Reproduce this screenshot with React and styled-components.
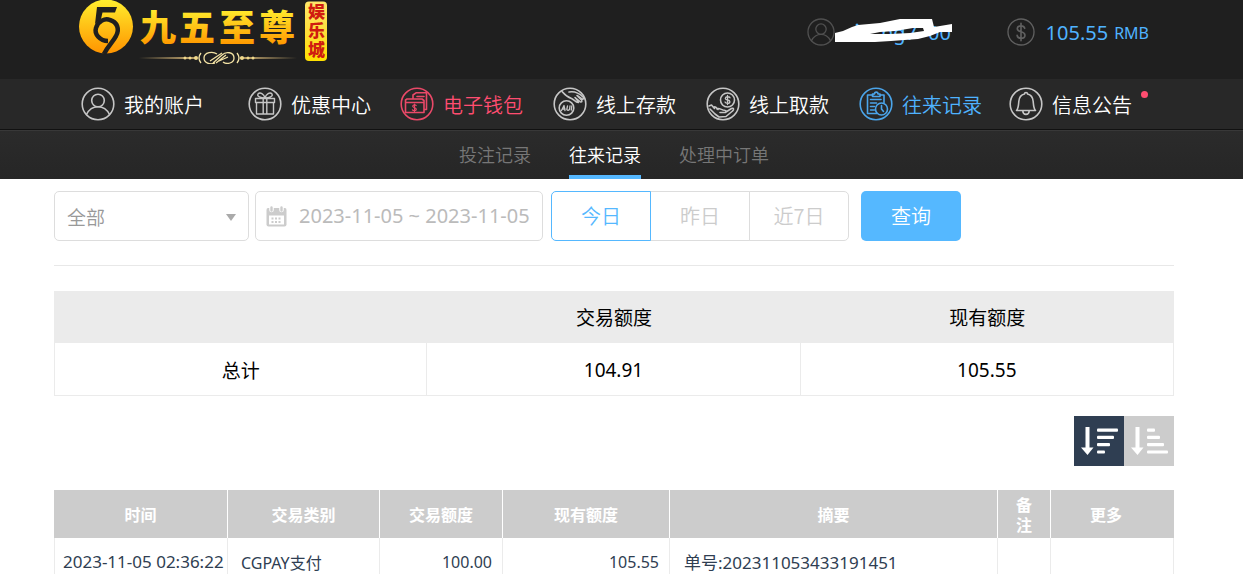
import React, { useState } from 'react'
import styled, { createGlobalStyle } from 'styled-components'

const GlobalStyle = createGlobalStyle`
html{
scrollbar-width:none;
}
body{
margin:0;
background:#fff;
font-family:'Noto Sans','Noto Sans CJK SC',sans-serif;
}
*{
box-sizing:border-box;
}
button,input,select{
font-family:inherit;
}
`
const Inner = styled.div`
padding:0 69px 0 54px;
`
const TopBar = styled.header`
background:#1f1f1f;
`
const TopRow = styled.div`
display:flex;
justify-content:space-between;
height:79px;
padding:0 25px;
`
const TopInfo = styled.div`
display:flex;
align-items:center;
height:64px;
color:#4fb3ff;
font-size:20px;
`
const UserBox = styled.div`
display:flex;
align-items:center;
margin-right:54px;
`
const Money = styled.span`
margin:0 6px 0 11px;
`
const Currency = styled.span`
font-size:16px;
padding-top:2px;
`
const NavBar = styled.nav`
background:#282828;
border-bottom:1px solid #111;
`
const NavList = styled.div`
display:grid;
grid-template-columns:167fr 152fr 153fr 153fr 153fr 150fr 165fr;
height:50px;
padding-left:27px;
`
const NavLink = styled.a`
display:flex;
align-items:center;
gap:9px;
font-family:'Noto Sans CJK SC',sans-serif;
font-size:20px;
font-weight:350;
white-space:nowrap;
text-decoration:none;
color:${(props) => props.$color || '#fff'};
svg{
flex:none;
opacity:0.9;
}
`
const NavText = styled.span`
position:relative;
`
const Dot = styled.i`
position:absolute;
top:1px;
right:-16px;
width:7px;
height:7px;
border-radius:50%;
background:#ff4d70;
`
const SubBar = styled.nav`
background:linear-gradient(#2b2b2b,#262626);
border-top:1px solid #383838;
`
const SubList = styled.div`
display:flex;
justify-content:center;
gap:38px;
height:48px;
`
const SubLink = styled.a`
display:flex;
align-items:center;
font-family:'Noto Sans CJK SC',sans-serif;
font-size:18px;
font-weight:350;
text-decoration:none;
padding-top:2px;
color:${(props) => (props.$active ? '#fff' : '#777')};
border-bottom:4px solid ${(props) => (props.$active ? '#55b8ff' : 'transparent')};
`
const Filters = styled.form`
display:flex;
padding:12px 0 24px;
border-bottom:1px solid #e8e8e8;
margin-bottom:25px;
`
const SelectBox = styled.div`
position:relative;
width:195px;
margin-right:6px;
&::after{
content:'';
position:absolute;
right:13px;
top:23px;
border:5px solid transparent;
border-top:7px solid #aaa;
border-bottom:0;
pointer-events:none;
}
`
const Select = styled.select`
appearance:none;
width:100%;
height:50px;
padding:0 12px;
border:1px solid #ddd;
border-radius:5px;
background:#fff;
color:#999;
font-family:'Noto Sans CJK SC',sans-serif;
font-size:19px;
font-weight:350;
`
const DateBox = styled.label`
display:flex;
align-items:center;
gap:12px;
width:288px;
height:50px;
margin-right:8px;
padding:0 8px 0 10px;
border:1px solid #ddd;
border-radius:5px;
svg{
flex:none;
}
`
const DateInput = styled.input`
flex:1;
min-width:0;
padding:0 0 2px;
border:0;
outline:0;
color:#bbb;
font-size:20px;
`
const DayGroup = styled.div`
display:flex;
margin-right:12px;
`
const DayButton = styled.button`
width:100px;
height:50px;
padding:0 0 2px;
background:#fff;
font-family:'Noto Sans CJK SC',sans-serif;
font-size:20px;
font-weight:350;
color:${(props) => (props.$active ? '#55b8ff' : '#ccc')};
border:1px solid ${(props) => (props.$active ? '#55b8ff' : '#ddd')};
position:relative;
z-index:${(props) => (props.$active ? 1 : 0)};
& + &{
margin-left:-1px;
}
&:first-child{
border-radius:5px 0 0 5px;
}
&:last-child{
border-radius:0 5px 5px 0;
}
`
const SearchButton = styled.button`
width:100px;
height:50px;
padding:0 0 2px;
border:0;
border-radius:5px;
background:#55b8ff;
color:#fff;
font-family:'Noto Sans CJK SC',sans-serif;
font-size:20px;
font-weight:350;
`
const Summary = styled.table`
width:100%;
table-layout:fixed;
border-collapse:separate;
border-spacing:0;
font-size:19px;
color:#000;
text-align:center;
th{
height:52px;
padding:0;
background:#ebebeb;
font-weight:400;
}
td{
height:53px;
padding:2px 0 0;
border-right:1px solid #ebebeb;
border-bottom:1px solid #ebebeb;
}
td:first-child{
border-left:1px solid #ebebeb;
}
`
const SortRow = styled.div`
display:flex;
justify-content:flex-end;
padding:20px 0 24px;
`
const SortButton = styled.button`
width:50px;
height:50px;
padding:0;
border:0;
background:${(props) => (props.$active ? '#2f3e52' : '#ccc')};
svg{
display:block;
}
`
const Records = styled.table`
width:100%;
table-layout:fixed;
border-collapse:separate;
border-spacing:0;
font-size:16px;
color:#2f3e52;
`
const HeadCell = styled.th`
height:48px;
padding:2px ${(props) => (props.$last ? 28 : 16)}px 0 16px;
background:#ccc;
color:#fff;
line-height:20px;
border-right:1px solid ${(props) => (props.$last ? '#ccc' : '#fff')};
`
const Cell = styled.td`
height:48px;
padding:0 10px 0 ${(props) => props.$indent || 9}px;
text-align:${(props) => props.$align || 'left'};
font-size:${(props) => (props.$large ? 17 : 16)}px;
white-space:nowrap;
border-right:1px solid #ebebeb;
border-bottom:1px solid #ebebeb;
&:first-child{
border-left:1px solid #ebebeb;
padding-right:0;
padding-left:8px;
}
`

const Logo = () => (
    <svg width="250" height="64" viewBox="0 0 250 64" role="img" aria-label="九五至尊娱乐城">
        <defs>
            <linearGradient id="gold" x1="0" y1="0" x2="0" y2="1">
                <stop offset="0" stopColor="#ffee2e" />
                <stop offset="0.45" stopColor="#ffc518" />
                <stop offset="1" stopColor="#ff9400" />
            </linearGradient>
            <linearGradient id="goldText" gradientUnits="userSpaceOnUse" x1="0" y1="9" x2="0" y2="44">
                <stop offset="0" stopColor="#ffee2e" />
                <stop offset="1" stopColor="#ff9a00" />
            </linearGradient>
            <linearGradient id="badge" x1="0" y1="0" x2="0" y2="1">
                <stop offset="0" stopColor="#ffe76a" />
                <stop offset="0.5" stopColor="#ffdf3a" />
                <stop offset="1" stopColor="#ffe000" />
            </linearGradient>
            <linearGradient id="line" gradientUnits="userSpaceOnUse" x1="60" y1="0" x2="218" y2="0">
                <stop offset="0" stopColor="#d8b878" stopOpacity="0" />
                <stop offset="0.3" stopColor="#d8b878" />
                <stop offset="0.7" stopColor="#d8b878" />
                <stop offset="1" stopColor="#d8b878" stopOpacity="0" />
            </linearGradient>
        </defs>
        <circle cx="27" cy="26.5" r="27" fill="url(#gold)" />
        <path d="M18 7H38L36 12.500H23.500L22 19L16 24Z" fill="#1f1f1f" />
        <path d="M29 41C21 41 15 34 17 28C19 21 26 18 31 20C38 22 41 29 37 36C34 42 29 46 25 54" fill="none" stroke="#1f1f1f" strokeWidth="4.500" />
        <g fontFamily="'Liberation Sans','Noto Sans CJK SC',sans-serif" fontWeight="900">
            <g fill="url(#goldText)" fontSize="36">
                <text x="61" y="41">九</text>
                <text x="100" y="41">五</text>
                <text x="140" y="41">至</text>
                <text x="180" y="41">尊</text>
            </g>
            <rect x="226" y="1.500" width="22" height="59.500" rx="4" fill="url(#badge)" />
            <g fill="#d01c10" fontSize="17">
                <text x="229" y="18">娱</text>
                <text x="229" y="37">乐</text>
                <text x="229" y="56">城</text>
            </g>
        </g>
        <path d="M60 57H118V59H60ZM161 57H218V59H161Z" fill="url(#line)" opacity="0.800" />
        <g fill="none" stroke="#f3e2a4" strokeWidth="1.300">
            <path d="M136 63C131 65 125 63 125 58C125 52 134 51 138 54M144 62C148 65 155 63 155 58C155 52 147 51 143 55L134 63M131 61L143 53M137 63L147 55M140 61L149 57" />
            <path d="M122 53Q118 58 122 63M158 53Q162 58 158 63" />
        </g>
        <g fill="#f0d98c">
            <circle cx="106" cy="58" r="1.500" />
            <circle cx="111" cy="58" r="1.500" />
            <circle cx="117" cy="58" r="2" />
            <circle cx="163" cy="58" r="2" />
            <circle cx="169" cy="58" r="1.500" />
            <circle cx="174" cy="58" r="1.500" />
        </g>
    </svg>
)

const Ring = ({ size = 34, color = 'currentColor', children }) => (
    <svg width={size} height={size} viewBox="0 0 34 34" fill="none" stroke={color} strokeWidth="1.600" strokeLinecap="round" strokeLinejoin="round" aria-hidden="true">
        <circle cx="17" cy="17" r="15.800" />
        {children}
    </svg>
)

const personShape = (
    <>
        <circle cx="17" cy="13.500" r="6.300" />
        <path d="M5.500 27.500C8 22.500 12 19.800 17 19.800S26 22.500 28.500 27.500" />
    </>
)
const dollarShape = <path strokeWidth="2" d="M21.500 12.500C21 10.500 19.500 9.500 17 9.500C14.500 9.500 12.500 10.800 12.500 13C12.500 18 21.800 15.500 21.800 20.800C21.800 23 19.800 24.500 17 24.500C14.200 24.500 12.500 23 12.300 21M17 6.500V27.500" />
const giftShape = (
    <path strokeWidth="1.400" d="M7.500 11.500H26.500V15.500H7.500ZM8.500 15.500V27H25.500V15.500M15.200 11.500V27M18.800 11.500V27M17 11C13 11 8.500 9.500 10 7C12 4.500 16 7 17 11C18 7 22 4.500 24 7C25.500 9.500 21 11 17 11" />
)
const walletShape = (
    <>
        <path d="M13 11V8L16 5.800H26.500V22.500H24M17 9.500H24M5.500 13L7 12H22L24 13.500V25.500H5.500ZM5.500 15.500H24" />
        <path strokeWidth="1.200" d="M16.200 18.500C15.500 17.400 12.700 17.600 12.700 19.300C12.700 21 16.300 20.300 16.300 22.200C16.300 24 13.200 23.900 12.400 22.800M14.500 17V24.500" />
    </>
)
const depositShape = (
    <>
        <path d="M9 4.500C12 8 15.500 10.500 18.500 11.500C21 12.500 23 16 25.500 15.500C24.500 13.500 23 11.500 22 10.500L27.500 15C29.500 15 29 13.500 28 12.500L24 8.500L29 12C31 12.500 31 11 30 10C26.500 6.500 21 4 16 5" />
        <circle cx="13.500" cy="21" r="7.300" />
        <path strokeWidth="1.300" d="M8.500 23.500L11 18.500L12 23.500M9.500 22H12M14.500 19L13.800 22.500Q15 24 16.500 22.500L17 19M18.800 19L18.300 23" />
    </>
)
const withdrawShape = (
    <>
        <circle cx="21.500" cy="13" r="7" />
        <path strokeWidth="1.300" d="M24 10.800C23.200 9.200 19.300 9.400 19.300 11.500C19.300 13.700 23.900 12.300 23.900 14.700C23.900 16.900 19.800 16.800 19 15M21.500 8.500V17.500" />
        <path d="M3 19L5.500 18L8.500 21.500M7.500 20.500C9 19 10.500 20.500 12 22.500M11 22C13 20.500 14.500 22.500 17 23C20 23.500 21 24 19.500 25.500H14M20 25L25.500 21.500C28 20.500 28 23 26.500 24L20 29.500L13 30L9 27L4 22" />
    </>
)
const recordShape = (
    <>
        <path d="M14 8H8.500V26.500H18M21 8H25V15.500M13.500 9.500V7H15.500C15.500 4.500 19 4.500 19 7H21V9.500ZM11.500 12.500H22M11.500 16H17.500M11.500 19.500H15.500M11.500 23H15.500" />
        <circle cx="22.500" cy="22" r="6" />
        <path d="M22.500 18.500V22L24.500 24.500" />
    </>
)
const bellShape = (
    <path d="M7.500 23.500C9.500 21.500 9.500 18 9.800 14.500C10.200 10 13 7.500 15.500 7C15.500 5 18.500 5 18.500 7C21 7.500 23.800 10 24.200 14.500C24.500 18 24.500 21.500 26.500 23.500ZM13.800 24C14 28.500 20 28.500 20.200 24" />
)

const UserName = () => (
    <svg width="118" height="34" viewBox="0 -1 118 34" aria-hidden="true">
        <g fill="#4fb3ff" fontSize="20" fontFamily="'Noto Sans',sans-serif">
            <text x="46" y="24">ng7</text>
            <text x="93" y="24">00</text>
        </g>
        <circle cx="22" cy="9" r="1.500" fill="#4fb3ff" />
        <path fill="#fff" fillRule="evenodd" d="M0 17L8 15L17 11L23 9L45 7L65 3H97L99 11L117 8V16L105 16L95 20L83 23L56 25L40 26H0ZM35 18L55 18L75 17L89 15L88 12L78 12L60 15L45 16Z" />
    </svg>
)

const CalendarIcon = () => (
    <svg width="21" height="21" viewBox="0 0 21 21" aria-hidden="true">
        <path fill="#ccc" d="M2 2H19Q20.500 2 20.500 4V18.500Q20.500 20.500 18.500 20.500H2.500Q.5 20.500 .5 18.500V4Q.5 2 2 2Z" />
        <path fill="#fff" d="M3 9.500H18V18.500H3Z" />
        <path stroke="#fff" strokeWidth="4.500" strokeLinecap="round" d="M5.500 2V4M15.500 2V4" />
        <path stroke="#ccc" strokeWidth="2.400" strokeLinecap="round" d="M5.500 1.500V4.500M15.500 1.500V4.500" />
        <path stroke="#ccc" strokeWidth="2" strokeDasharray="2 1.500" d="M5.500 12.500H16M5.500 16H16" />
    </svg>
)

const SortIcon = ({ bars }) => (
    <svg width="50" height="50" viewBox="0 0 50 50" fill="#fff" aria-hidden="true">
        <path d="M11.500 11H15.500V31.500H19.500L13.500 39L7 31.500H11.500Z" />
        {bars.map((w, i) => (
            <rect key={i} x="23" y={12.500 + i * 7.300} width={w} height="3.200" rx="1" />
        ))}
    </svg>
)

const menu = [
    { name: '我的账户', shape: personShape },
    { name: '优惠中心', shape: giftShape },
    { name: '电子钱包', shape: walletShape, color: '#ff4d70' },
    { name: '线上存款', shape: depositShape },
    { name: '线上取款', shape: withdrawShape },
    { name: '往来记录', shape: recordShape, color: '#4fb3ff' },
    { name: '信息公告', shape: bellShape, dot: true },
]
const subMenu = ['投注记录', '往来记录', '处理中订单']
const days = ['今日', '昨日', '近7日']
const columns = [
    { name: '时间', width: 174 },
    { name: '交易类别', width: 152 },
    { name: '交易额度', width: 123 },
    { name: '现有额度', width: 167 },
    { name: '摘要', width: 328 },
    { name: '备注', width: 53 },
    { name: '更多', width: 123 },
]

function App() {
    const [day, setDay] = useState('今日')
    const [order, setOrder] = useState('desc')
    const [dates, setDates] = useState('2023-11-05 ~ 2023-11-05')

    return (
        <>
            <GlobalStyle />
            <TopBar>
                <Inner>
                    <TopRow>
                        <Logo />
                        <TopInfo>
                            <UserBox>
                                <Ring size={28} color="#505050">{personShape}</Ring>
                                <UserName />
                            </UserBox>
                            <Ring size={28} color="#606060">{dollarShape}</Ring>
                            <Money>105.55</Money>
                            <Currency>RMB</Currency>
                        </TopInfo>
                    </TopRow>
                </Inner>
            </TopBar>
            <NavBar>
                <Inner>
                    <NavList>
                        {menu.map((item) => (
                            <NavLink key={item.name} href="#" $color={item.color}>
                                <Ring color={item.color || '#d8d8d8'}>{item.shape}</Ring>
                                <NavText>
                                    {item.name}
                                    {item.dot && <Dot />}
                                </NavText>
                            </NavLink>
                        ))}
                    </NavList>
                </Inner>
            </NavBar>
            <SubBar>
                <Inner>
                    <SubList>
                        {subMenu.map((name) => (
                            <SubLink key={name} href="#" $active={name === '往来记录'}>{name}</SubLink>
                        ))}
                    </SubList>
                </Inner>
            </SubBar>
            <Inner as="main">
                <Filters onSubmit={(e) => e.preventDefault()}>
                    <SelectBox>
                        <Select aria-label="交易类别">
                            <option>全部</option>
                        </Select>
                    </SelectBox>
                    <DateBox>
                        <CalendarIcon />
                        <DateInput aria-label="日期" value={dates} onChange={(e) => setDates(e.target.value)} />
                    </DateBox>
                    <DayGroup>
                        {days.map((name) => (
                            <DayButton key={name} type="button" $active={day === name} onClick={() => setDay(name)}>{name}</DayButton>
                        ))}
                    </DayGroup>
                    <SearchButton type="submit">查询</SearchButton>
                </Filters>

                <Summary>
                    <thead>
                        <tr>
                            <th></th>
                            <th>交易额度</th>
                            <th>现有额度</th>
                        </tr>
                    </thead>
                    <tbody>
                        <tr>
                            <td>总计</td>
                            <td>104.91</td>
                            <td>105.55</td>
                        </tr>
                    </tbody>
                </Summary>

                <SortRow>
                    <SortButton type="button" aria-label="降序" $active={order === 'desc'} onClick={() => setOrder('desc')}>
                        <SortIcon bars={[21, 17, 13, 8]} />
                    </SortButton>
                    <SortButton type="button" aria-label="升序" $active={order === 'asc'} onClick={() => setOrder('asc')}>
                        <SortIcon bars={[8, 13, 17, 21]} />
                    </SortButton>
                </SortRow>

                <Records>
                    <colgroup>
                        {columns.map((col) => (
                            <col key={col.name} style={{ width: `${(col.width / 1120) * 100}%` }} />
                        ))}
                    </colgroup>
                    <thead>
                        <tr>
                            {columns.map((col, i) => (
                                <HeadCell key={col.name} $last={i === columns.length - 1}>{col.name}</HeadCell>
                            ))}
                        </tr>
                    </thead>
                    <tbody>
                        <tr>
                            <Cell $large>2023-11-05 02:36:22</Cell>
                            <Cell $indent={13}>CGPAY支付</Cell>
                            <Cell $align="right">100.00</Cell>
                            <Cell $align="right">105.55</Cell>
                            <Cell $large $indent={14}>单号:202311053433191451</Cell>
                            <Cell></Cell>
                            <Cell></Cell>
                        </tr>
                    </tbody>
                </Records>
            </Inner>
        </>
    )
}

export default App
